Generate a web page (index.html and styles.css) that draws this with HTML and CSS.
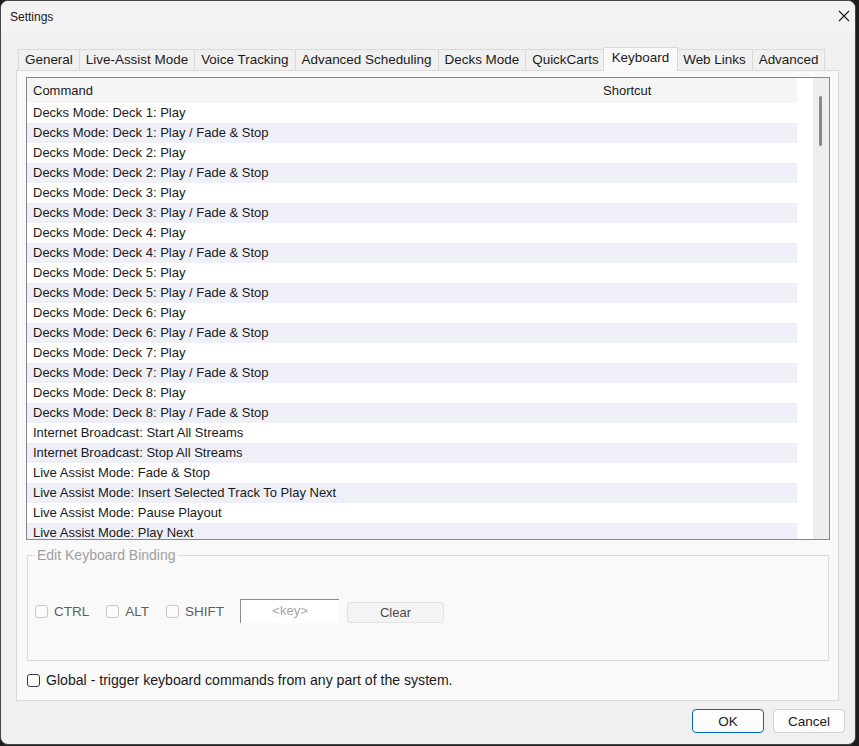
FILE: index.html
```html
<!DOCTYPE html>
<html lang="en">
<head>
    <meta charset="UTF-8">
    <meta name="viewport" content="width=device-width, initial-scale=1.0">
    <title>Settings</title>
    <link rel="stylesheet" href="styles.css">
</head>
<body>
    <div class="window">
        <div class="titlebar">
            <span class="title">Settings</span>
            <svg class="close" width="12" height="12" viewBox="0 0 12 12">
                <path d="M1 1 L11 11 M11 1 L1 11" stroke="#1a1a1a" stroke-width="1.1" fill="none"/>
            </svg>
        </div>

        <div class="main">
            <div class="tabs">
                <div class="tab">General</div>
                <div class="tab">Live-Assist Mode</div>
                <div class="tab">Voice Tracking</div>
                <div class="tab">Advanced Scheduling</div>
                <div class="tab">Decks Mode</div>
                <div class="tab">QuickCarts</div>
                <div class="tab active">Keyboard</div>
                <div class="tab">Web Links</div>
                <div class="tab">Advanced</div>
            </div>

            <div class="panel">
                <div class="list">
                    <div class="rows">
                        <div class="row head">
                            <span class="col-cmd">Command</span>
                            <span class="col-key">Shortcut</span>
                        </div>
                        <div class="row">Decks Mode: Deck 1: Play</div>
                        <div class="row">Decks Mode: Deck 1: Play / Fade &amp; Stop</div>
                        <div class="row">Decks Mode: Deck 2: Play</div>
                        <div class="row">Decks Mode: Deck 2: Play / Fade &amp; Stop</div>
                        <div class="row">Decks Mode: Deck 3: Play</div>
                        <div class="row">Decks Mode: Deck 3: Play / Fade &amp; Stop</div>
                        <div class="row">Decks Mode: Deck 4: Play</div>
                        <div class="row">Decks Mode: Deck 4: Play / Fade &amp; Stop</div>
                        <div class="row">Decks Mode: Deck 5: Play</div>
                        <div class="row">Decks Mode: Deck 5: Play / Fade &amp; Stop</div>
                        <div class="row">Decks Mode: Deck 6: Play</div>
                        <div class="row">Decks Mode: Deck 6: Play / Fade &amp; Stop</div>
                        <div class="row">Decks Mode: Deck 7: Play</div>
                        <div class="row">Decks Mode: Deck 7: Play / Fade &amp; Stop</div>
                        <div class="row">Decks Mode: Deck 8: Play</div>
                        <div class="row">Decks Mode: Deck 8: Play / Fade &amp; Stop</div>
                        <div class="row">Internet Broadcast: Start All Streams</div>
                        <div class="row">Internet Broadcast: Stop All Streams</div>
                        <div class="row">Live Assist Mode: Fade &amp; Stop</div>
                        <div class="row">Live Assist Mode: Insert Selected Track To Play Next</div>
                        <div class="row">Live Assist Mode: Pause Playout</div>
                        <div class="row">Live Assist Mode: Play Next</div>
                        <div class="row">Live Assist Mode: Stop</div>
                    </div>
                    <div class="list-gap"></div>
                    <div class="scrollbar"><div class="thumb"></div></div>
                </div>

                <fieldset class="binding">
                    <legend>Edit Keyboard Binding</legend>
                    <div class="binding-row">
                        <label class="check"><span class="box"></span>CTRL</label>
                        <label class="check"><span class="box"></span>ALT</label>
                        <label class="check"><span class="box"></span>SHIFT</label>
                        <div class="keybox">&lt;key&gt;</div>
                        <button class="clear-btn">Clear</button>
                    </div>
                </fieldset>

                <label class="global"><span class="box dark"></span>Global - trigger keyboard commands from any part of the system.</label>
            </div>
        </div>

        <div class="buttons">
            <button class="btn ok">OK</button>
            <button class="btn">Cancel</button>
        </div>
    </div>
</body>
</html>
```

FILE: styles.css
```css
body {
    margin: 0;
    background-color: #1e1e1e;
    font-family: "Liberation Sans", Arial, sans-serif;
    font-size: 13px;
    color: #1a1a1a;
}
.window {
    box-sizing: border-box;
    width: 856px;
    height: 745px;
    border: 1px solid #454545;
    border-radius: 8px;
    background-color: #f0f0f0;
    overflow: hidden;
    display: flex;
    flex-direction: column;
}
.titlebar {
    height: 31px;
    flex: none;
    display: flex;
    align-items: center;
    justify-content: space-between;
    padding: 0 5px 1px 9px;
    background-color: #f3f3f3;
}
.title {
    font-size: 12px;
}
.close {
    margin-top: -2px;
}
.main {
    margin: 0 16px 0 15px;
}
.tabs {
    display: flex;
    align-items: flex-end;
    height: 23px;
    margin: 14px 0 0 2px;
    position: relative;
    z-index: 1;
    font-size: 13.45px;
}
.tab {
    box-sizing: border-box;
    height: 21px;
    line-height: 20px;
    padding: 0 6px;
    border: 1px solid #d9d9d9;
    border-bottom: none;
    margin-right: -1px;
    background-color: #f0f0f0;
    white-space: nowrap;
}
.tab.active {
    height: 24px;
    line-height: 19px;
    margin: 0 -2px -1px -2px;
    padding: 0 8px;
    background-color: #f9f9f9;
    position: relative;
}
.panel {
    box-sizing: border-box;
    height: 631px;
    border: 1px solid #d9d9d9;
    background-color: #f9f9f9;
    padding: 6px 8px 0 9px;
}
.list {
    box-sizing: border-box;
    height: 463px;
    border: 1px solid #828790;
    background-color: #fff;
    display: flex;
}
.rows {
    width: 770px;
    overflow: hidden;
}
.row {
    height: 20px;
    line-height: 19px;
    padding-left: 6px;
    white-space: nowrap;
}
.row:nth-child(odd) {
    background-color: #efeff8;
}
.row.head {
    box-sizing: border-box;
    height: 25px;
    line-height: 24px;
    padding-top: 1px;
    background-color: #f5f5f5;
    display: flex;
}
.col-cmd {
    width: 570px;
}
.list-gap {
    width: 16px;
}
.scrollbar {
    width: 16px;
    background-color: #eeeeee;
}
.thumb {
    width: 3px;
    height: 50px;
    margin: 18px 0 0 6px;
    border-radius: 2px;
    background-color: #8a8a8a;
}
.binding {
    margin: 7px 1px 0 1px;
    padding: 0 0 0 7px;
    border: 1px solid #dcdcdc;
    height: 114px;
    box-sizing: border-box;
}
.binding legend {
    padding: 0 2px;
    line-height: 16px;
    font-size: 14px;
    color: #a0a0a0;
}
.binding-row {
    display: flex;
    align-items: center;
    padding-top: 36px;
}
.check {
    display: flex;
    align-items: center;
    font-size: 13.5px;
    color: #5f5f5f;
    margin-right: 17px;
}
.box {
    box-sizing: border-box;
    width: 13px;
    height: 13px;
    border: 1px solid #c9c9c9;
    border-radius: 3px;
    background-color: #fbfbfb;
    margin-right: 6px;
}
.box.dark {
    border-color: #3b3b3b;
    background-color: #fff;
}
.keybox {
    box-sizing: border-box;
    width: 99px;
    height: 24px;
    margin-left: -1px;
    border-top: 1px solid #8c8c8c;
    border-left: 1px solid #8c8c8c;
    background-color: #fff;
    color: #a6a6a6;
    text-align: center;
    line-height: 22px;
}
.clear-btn {
    box-sizing: border-box;
    width: 97px;
    height: 21px;
    margin: 2px 0 0 8px;
    border: 1px solid #e2e2e2;
    border-radius: 3px;
    background-color: #f4f4f4;
    font-family: inherit;
    font-size: 13px;
    color: #4a4a4a;
}
.global {
    display: flex;
    align-items: center;
    height: 18px;
    margin: 10px 0 0 1px;
    font-size: 14.1px;
}
.global .box {
    margin-right: 6px;
}
.buttons {
    display: flex;
    justify-content: flex-end;
    gap: 9px;
    padding: 8px 10px 0 0;
}
.btn {
    box-sizing: border-box;
    width: 72px;
    height: 24px;
    border: 1px solid #d0d0d0;
    border-radius: 4px;
    background-color: #fdfdfd;
    font-family: inherit;
    font-size: 13.5px;
    color: #1a1a1a;
}
.btn.ok {
    border-color: #0067c0;
}
```
